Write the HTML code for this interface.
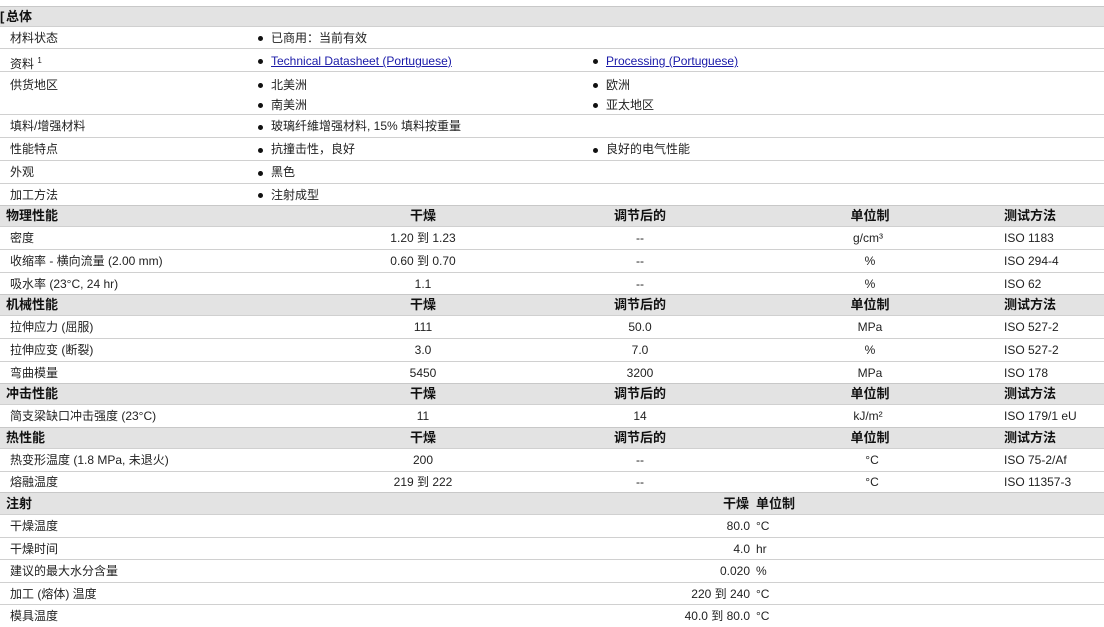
<!DOCTYPE html>
<html><head><meta charset="utf-8"><style>
body{margin:0;width:1104px;height:626px;overflow:hidden;background:#fff;font-family:"Liberation Sans","Noto Sans CJK SC",sans-serif;font-size:12px;color:#222;position:relative}
.r{position:absolute;left:0;width:1104px;border-top:1px solid #d0d0d0;box-sizing:border-box}
.h{background:#e3e3e3;font-weight:bold;font-size:13px;color:#111;border-top:1px solid #c8c8c8}
.c{position:absolute;white-space:nowrap}
.m{transform:translateX(-50%)}
.rt{transform:translateX(-100%)}
.b::before{content:"";position:absolute;left:-13px;top:50%;width:5px;height:5px;border-radius:50%;background:#111;margin-top:-2px}
a{color:#1a1aa8;text-decoration:underline}
</style></head><body>
<div class="r h" style="top:6px;height:20px;line-height:19px"><span class="c" style="left:0">[</span><span class="c" style="left:6px">总体</span></div>
<div class="r" style="top:26px;height:22px;line-height:22px"><span class="c" style="left:10px">材料状态</span><span class="c b" style="left:271px">已商用：当前有效</span></div>
<div class="r" style="top:48px;height:23px;line-height:24px"><span class="c" style="left:10px">资料 <sup style="font-size:8px">1</sup></span><span class="c b" style="left:271px"><a>Technical Datasheet (Portuguese)</a></span><span class="c b" style="left:606px"><a>Processing (Portuguese)</a></span></div>
<div class="r" style="top:71px;height:43px"><span class="c" style="left:10px;top:4px">供货地区</span><span class="c b" style="left:271px;top:4px">北美洲</span><span class="c b" style="left:606px;top:4px">欧洲</span><span class="c b" style="left:271px;top:24px">南美洲</span><span class="c b" style="left:606px;top:24px">亚太地区</span></div>
<div class="r" style="top:114px;height:23px;line-height:23px"><span class="c" style="left:10px">填料/增强材料</span><span class="c b" style="left:271px">玻璃纤維增强材料, 15% 填料按重量</span></div>
<div class="r" style="top:137px;height:23px;line-height:23px"><span class="c" style="left:10px">性能特点</span><span class="c b" style="left:271px">抗撞击性，良好</span><span class="c b" style="left:606px">良好的电气性能</span></div>
<div class="r" style="top:160px;height:23px;line-height:23px"><span class="c" style="left:10px">外观</span><span class="c b" style="left:271px">黑色</span></div>
<div class="r" style="top:183px;height:22px;line-height:22px"><span class="c" style="left:10px">加工方法</span><span class="c b" style="left:271px">注射成型</span></div>

<div class="r h" style="top:205px;height:21px;line-height:20px"><span class="c" style="left:6px">物理性能</span><span class="c m" style="left:423px">干燥</span><span class="c m" style="left:640px">调节后的</span><span class="c m" style="left:870px">单位制</span><span class="c" style="left:1004px">测试方法</span></div>
<div class="r" style="top:226px;height:23px;line-height:23px"><span class="c" style="left:10px">密度</span><span class="c m" style="left:423px">1.20 到 1.23</span><span class="c m" style="left:640px">--</span><span class="c m" style="left:868px">g/cm³</span><span class="c" style="left:1004px">ISO 1183</span></div>
<div class="r" style="top:249px;height:23px;line-height:23px"><span class="c" style="left:10px">收缩率 - 横向流量 (2.00 mm)</span><span class="c m" style="left:423px">0.60 到 0.70</span><span class="c m" style="left:640px">--</span><span class="c m" style="left:870px">%</span><span class="c" style="left:1004px">ISO 294-4</span></div>
<div class="r" style="top:272px;height:22px;line-height:22px"><span class="c" style="left:10px">吸水率 (23°C, 24 hr)</span><span class="c m" style="left:423px">1.1</span><span class="c m" style="left:640px">--</span><span class="c m" style="left:870px">%</span><span class="c" style="left:1004px">ISO 62</span></div>

<div class="r h" style="top:294px;height:21px;line-height:20px"><span class="c" style="left:6px">机械性能</span><span class="c m" style="left:423px">干燥</span><span class="c m" style="left:640px">调节后的</span><span class="c m" style="left:870px">单位制</span><span class="c" style="left:1004px">测试方法</span></div>
<div class="r" style="top:315px;height:23px;line-height:23px"><span class="c" style="left:10px">拉伸应力 (屈服)</span><span class="c m" style="left:423px">111</span><span class="c m" style="left:640px">50.0</span><span class="c m" style="left:870px">MPa</span><span class="c" style="left:1004px">ISO 527-2</span></div>
<div class="r" style="top:338px;height:23px;line-height:23px"><span class="c" style="left:10px">拉伸应变 (断裂)</span><span class="c m" style="left:423px">3.0</span><span class="c m" style="left:640px">7.0</span><span class="c m" style="left:870px">%</span><span class="c" style="left:1004px">ISO 527-2</span></div>
<div class="r" style="top:361px;height:22px;line-height:22px"><span class="c" style="left:10px">弯曲模量</span><span class="c m" style="left:423px">5450</span><span class="c m" style="left:640px">3200</span><span class="c m" style="left:870px">MPa</span><span class="c" style="left:1004px">ISO 178</span></div>

<div class="r h" style="top:383px;height:21px;line-height:20px"><span class="c" style="left:6px">冲击性能</span><span class="c m" style="left:423px">干燥</span><span class="c m" style="left:640px">调节后的</span><span class="c m" style="left:870px">单位制</span><span class="c" style="left:1004px">测试方法</span></div>
<div class="r" style="top:404px;height:23px;line-height:23px"><span class="c" style="left:10px">简支梁缺口冲击强度 (23°C)</span><span class="c m" style="left:423px">11</span><span class="c m" style="left:640px">14</span><span class="c m" style="left:868px">kJ/m²</span><span class="c" style="left:1004px">ISO 179/1 eU</span></div>

<div class="r h" style="top:427px;height:21px;line-height:20px"><span class="c" style="left:6px">热性能</span><span class="c m" style="left:423px">干燥</span><span class="c m" style="left:640px">调节后的</span><span class="c m" style="left:870px">单位制</span><span class="c" style="left:1004px">测试方法</span></div>
<div class="r" style="top:448px;height:23px;line-height:23px"><span class="c" style="left:10px">热变形温度 (1.8 MPa, 未退火)</span><span class="c m" style="left:423px">200</span><span class="c m" style="left:640px">--</span><span class="c m" style="left:872px">°C</span><span class="c" style="left:1004px">ISO 75-2/Af</span></div>
<div class="r" style="top:471px;height:21px;line-height:21px"><span class="c" style="left:10px">熔融温度</span><span class="c m" style="left:423px">219 到 222</span><span class="c m" style="left:640px">--</span><span class="c m" style="left:872px">°C</span><span class="c" style="left:1004px">ISO 11357-3</span></div>

<div class="r h" style="top:492px;height:22px;line-height:21px"><span class="c" style="left:6px">注射</span><span class="c rt" style="left:749px">干燥</span><span class="c" style="left:756px">单位制</span></div>
<div class="r" style="top:514px;height:23px;line-height:23px"><span class="c" style="left:10px">干燥温度</span><span class="c rt" style="left:750px">80.0</span><span class="c" style="left:756px">°C</span></div>
<div class="r" style="top:537px;height:22px;line-height:22px"><span class="c" style="left:10px">干燥时间</span><span class="c rt" style="left:750px">4.0</span><span class="c" style="left:756px">hr</span></div>
<div class="r" style="top:559px;height:23px;line-height:23px"><span class="c" style="left:10px">建议的最大水分含量</span><span class="c rt" style="left:750px">0.020</span><span class="c" style="left:756px">%</span></div>
<div class="r" style="top:582px;height:22px;line-height:22px"><span class="c" style="left:10px">加工 (熔体) 温度</span><span class="c rt" style="left:750px">220 到 240</span><span class="c" style="left:756px">°C</span></div>
<div class="r" style="top:604px;height:22px;line-height:22px"><span class="c" style="left:10px">模具温度</span><span class="c rt" style="left:750px">40.0 到 80.0</span><span class="c" style="left:756px">°C</span></div>
</body></html>
